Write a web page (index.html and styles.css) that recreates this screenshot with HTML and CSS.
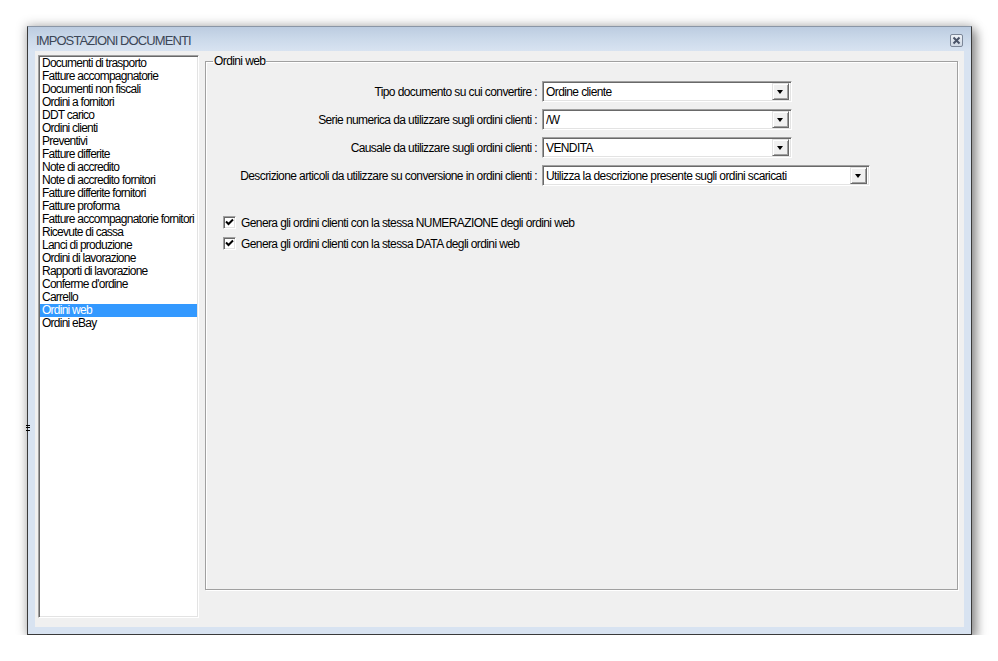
FILE: index.html
```html
<!DOCTYPE html>
<html lang="it">
<head>
  <meta charset="UTF-8">
  <title>Impostazioni documenti</title>
  <link rel="stylesheet" href="styles.css">
</head>
<body>
  <div class="window">
    <div class="grip"></div>
    <div class="titlebar">
      <span class="title">IMPOSTAZIONI DOCUMENTI</span>
      <span class="close-btn">
        <svg width="9" height="9" viewBox="0 0 9 9"><path d="M1.5 1.5 L7.5 7.5 M7.5 1.5 L1.5 7.5" stroke="#4a5468" stroke-width="2"/></svg>
      </span>
    </div>

    <div class="client">
      <ul class="listbox">
        <li>Documenti di trasporto</li>
        <li>Fatture accompagnatorie</li>
        <li>Documenti non fiscali</li>
        <li>Ordini a fornitori</li>
        <li>DDT carico</li>
        <li>Ordini clienti</li>
        <li>Preventivi</li>
        <li>Fatture differite</li>
        <li>Note di accredito</li>
        <li>Note di accredito fornitori</li>
        <li>Fatture differite fornitori</li>
        <li>Fatture proforma</li>
        <li>Fatture accompagnatorie fornitori</li>
        <li>Ricevute di cassa</li>
        <li>Lanci di produzione</li>
        <li>Ordini di lavorazione</li>
        <li>Rapporti di lavorazione</li>
        <li>Conferme d'ordine</li>
        <li>Carrello</li>
        <li class="selected">Ordini web</li>
        <li>Ordini eBay</li>
      </ul>

      <fieldset class="group">
        <legend>Ordini web</legend>

        <div class="form-row">
          <label>Tipo documento su cui convertire :</label>
          <div class="combo"><span class="combo-text">Ordine cliente</span><span class="combo-btn"></span></div>
        </div>
        <div class="form-row">
          <label>Serie numerica da utilizzare sugli ordini clienti :</label>
          <div class="combo"><span class="combo-text">/W</span><span class="combo-btn"></span></div>
        </div>
        <div class="form-row">
          <label>Causale da utilizzare sugli ordini clienti :</label>
          <div class="combo"><span class="combo-text">VENDITA</span><span class="combo-btn"></span></div>
        </div>
        <div class="form-row">
          <label>Descrizione articoli da utilizzare su conversione in ordini clienti :</label>
          <div class="combo wide"><span class="combo-text">Utilizza la descrizione presente sugli ordini scaricati</span><span class="combo-btn"></span></div>
        </div>

        <div class="checks">
          <div class="check-row">
            <span class="checkbox"><svg width="9" height="9" viewBox="0 0 9 9"><path d="M1 3.5 L3.5 6 L8 1.5" fill="none" stroke="#000" stroke-width="2"/></svg></span>
            <span>Genera gli ordini clienti con la stessa NUMERAZIONE degli ordini web</span>
          </div>
          <div class="check-row">
            <span class="checkbox"><svg width="9" height="9" viewBox="0 0 9 9"><path d="M1 3.5 L3.5 6 L8 1.5" fill="none" stroke="#000" stroke-width="2"/></svg></span>
            <span>Genera gli ordini clienti con la stessa DATA degli ordini web</span>
          </div>
        </div>
      </fieldset>
    </div>
  </div>
</body>
</html>
```

FILE: styles.css
```css
* {
  box-sizing: border-box;
  margin: 0;
  padding: 0;
}

body {
  background: #fff;
  padding: 26px 0 0 27px;
  font-family: "Liberation Sans", Arial, sans-serif;
  font-size: 12px;
  letter-spacing: -0.6px;
  color: #000;
}

.window {
  position: relative;
  width: 945px;
  height: 609px;
  background: #d8e3f1;
  border: 1px solid #3a3a3a;
  border-top-color: #8a96a6;
  box-shadow: 0 0 10px 1px rgba(0, 0, 0, 0.25), 5px 5px 10px rgba(0, 0, 0, 0.35);
}

.grip {
  position: absolute;
  left: -2px;
  top: 398px;
  width: 4px;
  height: 6px;
  border-top: 1px solid #000;
  border-bottom: 1px solid #000;
}

.grip::after {
  content: "";
  position: absolute;
  left: 0;
  top: 1px;
  width: 4px;
  height: 1px;
  background: #000;
}

.titlebar {
  height: 24px;
  display: flex;
  align-items: center;
  justify-content: space-between;
  padding: 0 8px 0 8px;
  background: linear-gradient(180deg, #bccce0 0%, #cbd9ea 50%, #d8e3f1 100%);
}

.title {
  font-size: 13px;
  letter-spacing: -0.9px;
  color: #3c4656;
  padding-top: 3px;
}

.close-btn {
  width: 13px;
  height: 13px;
  margin-top: 2px;
  border: 1px solid #7c8798;
  border-radius: 2px;
  background: linear-gradient(180deg, #eef2f7, #cfd8e4);
  display: flex;
  align-items: center;
  justify-content: center;
}

.client {
  margin: 0 7px;
  height: 576px;
  background: #f0f0f0;
  display: flex;
  align-items: flex-start;
  padding: 4px 6px 0 3px;
  gap: 6px;
}

.listbox {
  list-style: none;
  width: 161px;
  height: 563px;
  background: #fff;
  border: 1px solid;
  border-color: #a0a0a0 #fff #fff #a0a0a0;
  box-shadow: inset 1px 1px 0 #696969, inset -1px -1px 0 #e3e3e3;
  padding: 1px;
  overflow: hidden;
  letter-spacing: -0.75px;
}

.listbox li {
  height: 13px;
  line-height: 13px;
  padding-left: 2px;
  white-space: nowrap;
  overflow: hidden;
}

.listbox li.selected {
  background: #3399ff;
  color: #fff;
}

.group {
  flex: 1;
  height: 535px;
  border: 1px solid #a0a0a0;
  box-shadow: inset 1px 1px 0 #fff, 1px 1px 0 #fff;
  padding: 13px 0 0 0;
}

.group legend {
  margin-left: 7px;
  padding: 0 1px;
  line-height: 13px;
}

.form-row {
  display: flex;
  align-items: center;
  height: 21px;
  margin-bottom: 7px;
}

.form-row label {
  width: 331px;
  text-align: right;
  margin-right: 5px;
  white-space: nowrap;
}

.combo {
  width: 250px;
  height: 21px;
  background: #fff;
  border: 1px solid;
  border-color: #a0a0a0 #fff #fff #a0a0a0;
  box-shadow: inset 1px 1px 0 #696969, inset -1px -1px 0 #e3e3e3;
  display: flex;
  align-items: center;
  padding: 2px 2px 2px 3px;
}

.combo.wide {
  width: 328px;
}

.combo-text {
  flex: 1;
  white-space: nowrap;
  overflow: hidden;
}

.combo-btn {
  position: relative;
  width: 17px;
  height: 17px;
  background: #f0f0f0;
  border: 1px solid;
  border-color: #e3e3e3 #696969 #696969 #e3e3e3;
  box-shadow: inset 1px 1px 0 #fff, inset -1px -1px 0 #a0a0a0;
}

.combo-btn::after {
  content: "";
  position: absolute;
  left: 4px;
  top: 6px;
  border-left: 3.5px solid transparent;
  border-right: 3.5px solid transparent;
  border-top: 4px solid #000;
}

.checks {
  margin-top: 30px;
  padding-left: 17px;
}

.check-row {
  display: flex;
  align-items: center;
  height: 13px;
  margin-bottom: 8px;
}

.checkbox {
  width: 13px;
  height: 13px;
  margin-right: 5px;
  background: #fff;
  border: 1px solid;
  border-color: #a0a0a0 #fff #fff #a0a0a0;
  box-shadow: inset 1px 1px 0 #696969, inset -1px -1px 0 #e3e3e3;
  display: flex;
  align-items: center;
  justify-content: center;
}
```
